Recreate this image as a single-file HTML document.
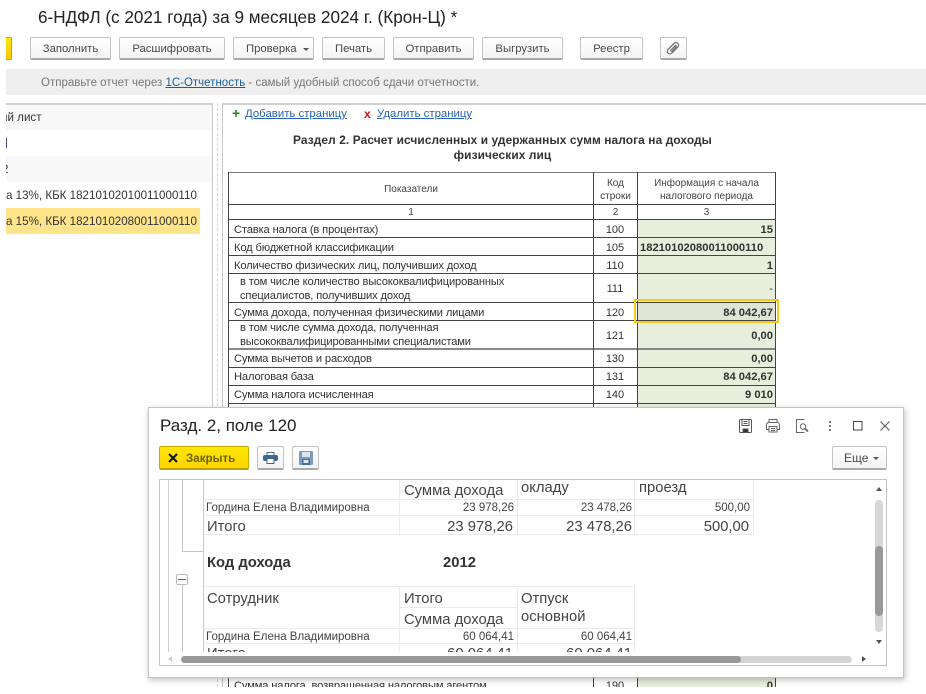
<!DOCTYPE html>
<html lang="ru"><head><meta charset="utf-8"><title>6-НДФЛ</title>
<style>
html,body{margin:0;padding:0;background:#fff}
#p{position:relative;width:926px;height:694px;overflow:hidden;background:#fff;font-family:"Liberation Sans",sans-serif;color:#333;filter:blur(.3px)}
#p div,#p span.a,#p svg{position:absolute}
.t{white-space:nowrap;line-height:14px}
.b{box-sizing:border-box;height:23px;top:37px;border:1px solid #c4c4c4;border-bottom:2px solid #a9a9a9;border-radius:2px;background:linear-gradient(#fff,#f3f3f3);font-size:11.3px;line-height:23px;text-align:center;color:#4a4a4a;white-space:nowrap}
.h{background:#444}
.l{font-size:11.15px;letter-spacing:-.14px;color:#333;white-space:nowrap;line-height:14px;left:234px}
.i{left:240px}
.c{font-size:11px;color:#333;left:593px;width:44px;text-align:center;line-height:14px}
.v{font-size:11.2px;font-weight:bold;color:#333;left:638px;width:135px;text-align:right;line-height:14px;white-space:nowrap}
.g{background:#e7efdc;left:638px;width:137px}
.s{font-size:11.5px;color:#444;white-space:nowrap;line-height:14px}
.big{font-size:14.8px;color:#444;white-space:nowrap;line-height:18px}
.n{text-align:right}
.tri{width:0;height:0;border:3px solid transparent;border-bottom:0;border-top:3px solid #555}
</style></head><body><div id="p">

<div class="t" style="left:38px;top:7px;font-size:17.15px;line-height:20px;color:#222">6-НДФЛ (с 2021 года) за 9 месяцев 2024 г. (Крон-Ц) *</div>

<div style="left:6px;top:37px;width:6px;height:23px;background:linear-gradient(#ffe600,#f5c800);border:1px solid #c9a800;border-left:0;box-sizing:border-box;border-radius:0 2px 2px 0"></div>
<div class="b" style="left:30px;width:81px">Заполнить</div>
<div class="b" style="left:119px;width:106px">Расшифровать</div>
<div class="b" style="left:233px;width:81px;text-align:left;padding-left:12px">Проверка</div>
<div class="tri" style="left:303px;top:48px"></div>
<div class="b" style="left:322px;width:63px">Печать</div>
<div class="b" style="left:393px;width:81px">Отправить</div>
<div class="b" style="left:482px;width:81px">Выгрузить</div>
<div class="b" style="left:580px;width:63px">Реестр</div>
<div class="b" style="left:660px;width:27px"></div>
<svg style="left:665px;top:41px" width="16" height="15" viewBox="0 0 16 15" fill="none" stroke="#777" stroke-width="1.300"><path d="M3 8.500 9 2.500a2.500 2.500 0 0 1 4 3.300L7 12a2.300 2.300 0 0 1-4-3.500"/><path d="M5 10 11 4M6.500 11 12 5"/></svg>

<div style="left:6px;top:69px;width:920px;height:26px;background:#efefef"></div>
<div class="t" style="left:41px;top:76px;font-size:11.5px;color:#777">Отправьте отчет через <span style="color:#1a5f9e;text-decoration:underline">1С-Отчетность</span> - самый удобный способ сдачи отчетности.</div>

<!-- left panel -->
<div style="left:6px;top:103px;width:207px;height:2px;background:#d0d0d0"></div>
<div style="left:212px;top:103px;width:1px;height:305px;background:#c8c8c8"></div>
<div style="left:6px;top:105px;width:206px;height:25px;background:#f8f8f8"></div>
<div style="left:6px;top:156px;width:206px;height:26px;background:#f8f8f8"></div>
<div style="left:6px;top:208px;width:194px;height:26px;background:#ffe48a"></div>
<div style="left:6px;top:111px;width:200px;height:16px;overflow:hidden"><div class="t" style="left:-5px;top:0;font-size:11.6px">ий лист</div></div>
<div style="left:6px;top:138px;width:1px;height:10px;background:#553a8a"></div>
<div style="left:6px;top:163px;width:3px;height:14px;overflow:hidden"><div class="t" style="left:-4px;top:0;font-size:11.6px">2</div></div>
<div class="t" style="left:6px;top:189px;font-size:11.6px">а 13%, КБК 18210102010011000110</div>
<div class="t" style="left:6px;top:215px;font-size:11.6px">а 15%, КБК 18210102080011000110</div>

<!-- splitter -->
<div style="left:217px;top:103px;width:0;height:584px;border-left:1px dashed #d4d4d4"></div>
<div style="left:222px;top:103px;width:704px;height:2px;background:#d0d0d0"></div>
<div style="left:222px;top:103px;width:1px;height:584px;background:#c8c8c8"></div>

<div style="left:232px;top:106px;font-size:14px;line-height:14px;font-weight:bold;color:#2a8a1e">+</div>
<div class="t" style="left:245px;top:107px;font-size:11.4px;color:#2a62b8;text-decoration:underline">Добавить страницу</div>
<div style="left:364px;top:107px;font-size:12px;line-height:14px;font-weight:bold;color:#e01010">x</div>
<div class="t" style="left:377px;top:107px;font-size:11.4px;color:#2a62b8;text-decoration:underline">Удалить страницу</div>

<div style="left:228px;top:133px;width:549px;text-align:center;font-size:11.9px;font-weight:bold;line-height:15px;color:#333;letter-spacing:.1px">Раздел 2. Расчет исчисленных и удержанных сумм налога на доходы<br>физических лиц</div>

<!-- green cells -->
<div class="g" style="top:220px;height:183px"></div>
<div class="g" style="top:403px;height:4px"></div>
<div class="g" style="top:678px;height:9px"></div>
<div style="left:637px;top:302px;width:138px;height:18px;background:#dfe5d4"></div>

<!-- table lines -->
<div class="h" style="left:228px;top:172px;width:548px;height:1px;background:#777"></div>
<div class="h" style="left:228px;top:204px;width:548px;height:1px"></div>
<div class="h" style="left:228px;top:219px;width:548px;height:1px"></div>
<div class="h" style="left:228px;top:237px;width:548px;height:1px"></div>
<div class="h" style="left:228px;top:255px;width:548px;height:1px"></div>
<div class="h" style="left:228px;top:273px;width:548px;height:1px"></div>
<div class="h" style="left:228px;top:302px;width:548px;height:1px"></div>
<div class="h" style="left:228px;top:320px;width:548px;height:1px"></div>
<div class="h" style="left:228px;top:348px;width:548px;height:2px;background:#888"></div>
<div class="h" style="left:228px;top:367px;width:548px;height:1px"></div>
<div class="h" style="left:228px;top:385px;width:548px;height:1px"></div>
<div class="h" style="left:228px;top:403px;width:548px;height:1px"></div>
<div class="h" style="left:228px;top:172px;width:1px;height:515px"></div>
<div class="h" style="left:593px;top:172px;width:1px;height:515px"></div>
<div class="h" style="left:637px;top:172px;width:1px;height:515px"></div>
<div class="h" style="left:775px;top:172px;width:1px;height:515px"></div>
<div style="left:634px;top:299px;width:145px;height:24px;box-sizing:border-box;border:2px solid #fcc91a"></div>

<!-- header -->
<div style="left:229px;top:183px;width:364px;text-align:center;font-size:10px;line-height:14px;color:#444">Показатели</div>
<div style="left:594px;top:177px;width:43px;text-align:center;font-size:10px;line-height:13px;color:#444">Код<br>строки</div>
<div style="left:638px;top:177px;width:137px;text-align:center;font-size:10px;line-height:13px;color:#444">Информация с начала<br>налогового периода</div>
<div style="left:229px;top:206px;width:364px;text-align:center;font-size:10px;line-height:14px;color:#444">1</div>
<div style="left:594px;top:206px;width:43px;text-align:center;font-size:10px;line-height:14px;color:#444">2</div>
<div style="left:638px;top:206px;width:137px;text-align:center;font-size:10px;line-height:14px;color:#444">3</div>

<!-- rows -->
<div class="l" style="top:223px">Ставка налога (в процентах)</div><div class="c" style="top:223px">100</div><div class="v" style="top:223px">15</div>
<div class="l" style="top:241px">Код бюджетной классификации</div><div class="c" style="top:241px">105</div><div class="v" style="top:241px;left:640px;width:auto">18210102080011000110</div>
<div class="l" style="top:259px">Количество физических лиц, получивших доход</div><div class="c" style="top:259px">110</div><div class="v" style="top:259px">1</div>
<div class="l i" style="top:276px;line-height:13.500px">в том числе количество высококвалифицированных<br>специалистов, получивших доход</div><div class="c" style="top:282px">111</div><div class="v" style="top:282px;font-weight:normal">-</div>
<div class="l" style="top:306px">Сумма дохода, полученная физическими лицами</div><div class="c" style="top:306px">120</div><div class="v" style="top:306px">84 042,67</div>
<div class="l i" style="top:322px;line-height:13.500px">в том числе сумма дохода, полученная<br>высококвалифицированными специалистами</div><div class="c" style="top:329px">121</div><div class="v" style="top:329px">0,00</div>
<div class="l" style="top:352px">Сумма вычетов и расходов</div><div class="c" style="top:352px">130</div><div class="v" style="top:352px">0,00</div>
<div class="l" style="top:370px">Налоговая база</div><div class="c" style="top:370px">131</div><div class="v" style="top:370px">84 042,67</div>
<div class="l" style="top:388px">Сумма налога исчисленная</div><div class="c" style="top:388px">140</div><div class="v" style="top:388px">9 010</div>
<div class="l" style="top:679px">Сумма налога, возвращенная налоговым агентом</div><div class="c" style="top:679px">190</div><div class="v" style="top:679px">0</div>

<!-- cut bottom -->
<div style="left:224px;top:687px;width:702px;height:7px;background:#fff"></div>

<!-- modal -->
<div style="left:148px;top:407px;width:756px;height:271px;box-sizing:border-box;background:#fff;border:1px solid #c4c4c4;box-shadow:1px 2px 6px rgba(0,0,0,.25)"></div>
<div class="t" style="left:160px;top:416px;font-size:17px;line-height:20px;color:#222">Разд. 2, поле 120</div>

<svg style="left:738px;top:418px" width="15" height="16" viewBox="0 0 15 16" fill="none" stroke="#555" stroke-width="1"><path d="M2.500 1.500h10a1 1 0 0 1 1 1v11a1 1 0 0 1-1 1h-10a1 1 0 0 1-1-1v-11a1 1 0 0 1 1-1z"/><path d="M4 1.500v6h7v-6M5.500 3.500h4M5.500 5.500h4"/><path d="M5 11h5v3.500H5z" fill="#333"/></svg>
<svg style="left:765px;top:418px" width="16" height="15" viewBox="0 0 16 15" fill="none" stroke="#666" stroke-width="1"><path d="M4 4.500v-3h8v3"/><path d="M3.500 11.500h-2v-5a2 2 0 0 1 2-2h9a2 2 0 0 1 2 2v5h-2"/><path d="M4 8.500h8v5.500H4zM6 10.500h4M6 12.500h4"/></svg>
<svg style="left:794px;top:418px" width="16" height="16" viewBox="0 0 16 16" fill="none" stroke="#666" stroke-width="1"><path d="M10.500 1.500H2.500v13h8"/><circle cx="9" cy="8.500" r="2.700"/><path d="M11 10.500l3 3" stroke-width="1.800"/></svg>
<svg style="left:828px;top:420px" width="4" height="12" viewBox="0 0 4 12" fill="#777"><rect x="1" y="1" width="2" height="2"/><rect x="1" y="5" width="2" height="2"/><rect x="1" y="9" width="2" height="2"/></svg>
<svg style="left:853px;top:421px" width="10" height="10" viewBox="0 0 10 10" fill="none" stroke="#444" stroke-width="1"><rect x=".5" y=".5" width="8.500" height="8.500"/></svg>
<svg style="left:880px;top:421px" width="10" height="10" viewBox="0 0 10 10" fill="none" stroke="#555" stroke-width="1"><path d="M.500.500l9 9M9.500.500l-9 9"/></svg>

<div style="left:159px;top:446px;width:90px;height:24px;box-sizing:border-box;border:1px solid #c9ac00;border-bottom:2px solid #bda000;border-radius:2px;background:linear-gradient(#ffe600,#fdd400)"></div>
<svg style="left:167px;top:452px" width="12" height="12" viewBox="0 0 12 12" fill="none" stroke="#111" stroke-width="2"><path d="M2 2l8 8M10 2l-8 8"/></svg>
<div class="t" style="left:186px;top:452px;font-size:11.6px;font-weight:bold;color:#6b6200">Закрыть</div>

<div class="b" style="left:257px;top:446px;width:27px;height:24px"></div>
<svg style="left:263px;top:452px" width="15" height="12" viewBox="0 0 15 12"><path d="M4 .5h7v3H4z" fill="#fff" stroke="#4a6f96"/><rect x="0" y="3" width="15" height="6" rx="2" fill="#3f688f"/><path d="M4 6.500h7v5H4z" fill="#fff" stroke="#3f688f"/></svg>
<div class="b" style="left:292px;top:446px;width:27px;height:24px"></div>
<svg style="left:299px;top:451px" width="14" height="14" viewBox="0 0 14 14"><rect width="14" height="14" rx="1" fill="#7d9cbc"/><rect x="3" y="1" width="8" height="5" fill="#dbe5ee"/><rect x="3" y="8" width="8" height="6" fill="#46709a"/><rect x="4.500" y="9" width="5" height="3" fill="#dfe7ef"/></svg>

<div class="b" style="left:832px;top:446px;width:55px;height:24px;line-height:23px;font-size:12px;text-align:left;padding-left:11px">Еще</div>
<div class="tri" style="left:873px;top:457px"></div>

<!-- report box -->
<div style="left:159px;top:479px;width:728px;height:187px;box-sizing:border-box;border:1px solid #c4c4c4;background:#fff"></div>

<!-- tree -->
<div style="left:168px;top:480px;width:1px;height:172px;background:#d0d0d0"></div>
<div style="left:182px;top:480px;width:1px;height:71px;background:#c4c4c4"></div>
<div style="left:182px;top:551px;width:21px;height:1px;background:#c4c4c4"></div>
<div style="left:176px;top:574px;width:12px;height:11px;box-sizing:border-box;border:1px solid #bbb;border-radius:2px;background:#fff"></div>
<div style="left:178px;top:579px;width:8px;height:1px;background:#666"></div>
<div style="left:182px;top:585px;width:1px;height:67px;background:#c4c4c4"></div>
<div style="left:203px;top:480px;width:1px;height:172px;background:#c8c8c8"></div>

<!-- report grid -->
<div style="left:204px;top:480px;width:550px;height:55px;box-sizing:border-box;border-right:1px solid #eaeaea;border-bottom:1px solid #eaeaea"></div>
<div style="left:204px;top:499px;width:550px;height:1px;background:#eaeaea"></div>
<div style="left:204px;top:515px;width:550px;height:1px;background:#eaeaea"></div>
<div style="left:399px;top:480px;width:1px;height:55px;background:#eaeaea"></div>
<div style="left:517px;top:480px;width:1px;height:55px;background:#eaeaea"></div>
<div style="left:634px;top:480px;width:1px;height:55px;background:#eaeaea"></div>

<div style="left:204px;top:586px;width:431px;height:1px;background:#eaeaea"></div>
<div style="left:399px;top:607px;width:118px;height:1px;background:#eaeaea"></div>
<div style="left:204px;top:628px;width:431px;height:1px;background:#eaeaea"></div>
<div style="left:204px;top:643px;width:431px;height:1px;background:#eaeaea"></div>
<div style="left:399px;top:586px;width:1px;height:66px;background:#eaeaea"></div>
<div style="left:517px;top:586px;width:1px;height:66px;background:#eaeaea"></div>
<div style="left:634px;top:586px;width:1px;height:66px;background:#eaeaea"></div>

<div class="big" style="left:404px;top:482px">Сумма дохода</div>
<div style="left:518px;top:480px;width:115px;height:17px;overflow:hidden"><div class="big" style="left:3px;top:-1px">окладу</div></div>
<div style="left:635px;top:480px;width:115px;height:17px;overflow:hidden"><div class="big" style="left:4px;top:-1px">проезд</div></div>
<div class="s" style="left:206px;top:501px">Гордина Елена Владимировна</div>
<div class="s n" style="left:400px;top:501px;width:114px">23 978,26</div>
<div class="s n" style="left:518px;top:501px;width:114px">23 478,26</div>
<div class="s n" style="left:635px;top:501px;width:115px">500,00</div>
<div class="big" style="left:207px;top:518px">Итого</div>
<div class="big n" style="left:400px;top:518px;width:113px">23 978,26</div>
<div class="big n" style="left:518px;top:518px;width:114px">23 478,26</div>
<div class="big n" style="left:635px;top:518px;width:114px">500,00</div>

<div class="big" style="left:207px;top:554px;font-weight:bold;color:#333">Код дохода</div>
<div class="big" style="left:443px;top:554px;font-weight:bold;color:#333">2012</div>

<div class="big" style="left:207px;top:590px">Сотрудник</div>
<div class="big" style="left:404px;top:590px">Итого</div>
<div class="big" style="left:521px;top:590px">Отпуск</div>
<div class="big" style="left:521px;top:608px">основной</div>
<div class="big" style="left:404px;top:611px">Сумма дохода</div>
<div class="s" style="left:206px;top:630px">Гордина Елена Владимировна</div>
<div class="s n" style="left:400px;top:630px;width:114px">60 064,41</div>
<div class="s n" style="left:518px;top:630px;width:114px">60 064,41</div>
<div style="left:204px;top:644px;width:431px;height:8px;overflow:hidden">
  <div class="big" style="left:3px;top:1px">Итого</div>
  <div class="big n" style="left:196px;top:1px;width:113px">60 064,41</div>
  <div class="big n" style="left:314px;top:1px;width:114px">60 064,41</div>
</div>

<!-- scrollbars -->
<div style="left:875px;top:500px;width:8px;height:132px;border-radius:4px;background:#d8d8d8"></div>
<div style="left:875px;top:546px;width:8px;height:70px;border-radius:4px;background:#999"></div>
<div style="left:876px;top:487px;width:0;height:0;border:3.500px solid transparent;border-top:0;border-bottom:4px solid #555"></div>
<div style="left:876px;top:640px;width:0;height:0;border:3.500px solid transparent;border-bottom:0;border-top:4px solid #555"></div>
<div style="left:181px;top:656px;width:671px;height:7px;border-radius:4px;background:#d4d4d4"></div>
<div style="left:181px;top:656px;width:560px;height:7px;border-radius:4px;background:#999"></div>
<div style="left:168px;top:656px;width:0;height:0;border:3.500px solid transparent;border-left:0;border-right:4px solid #ccc"></div>
<div style="left:862px;top:656px;width:0;height:0;border:3.500px solid transparent;border-right:0;border-left:4px solid #555"></div>
</div></body></html>
